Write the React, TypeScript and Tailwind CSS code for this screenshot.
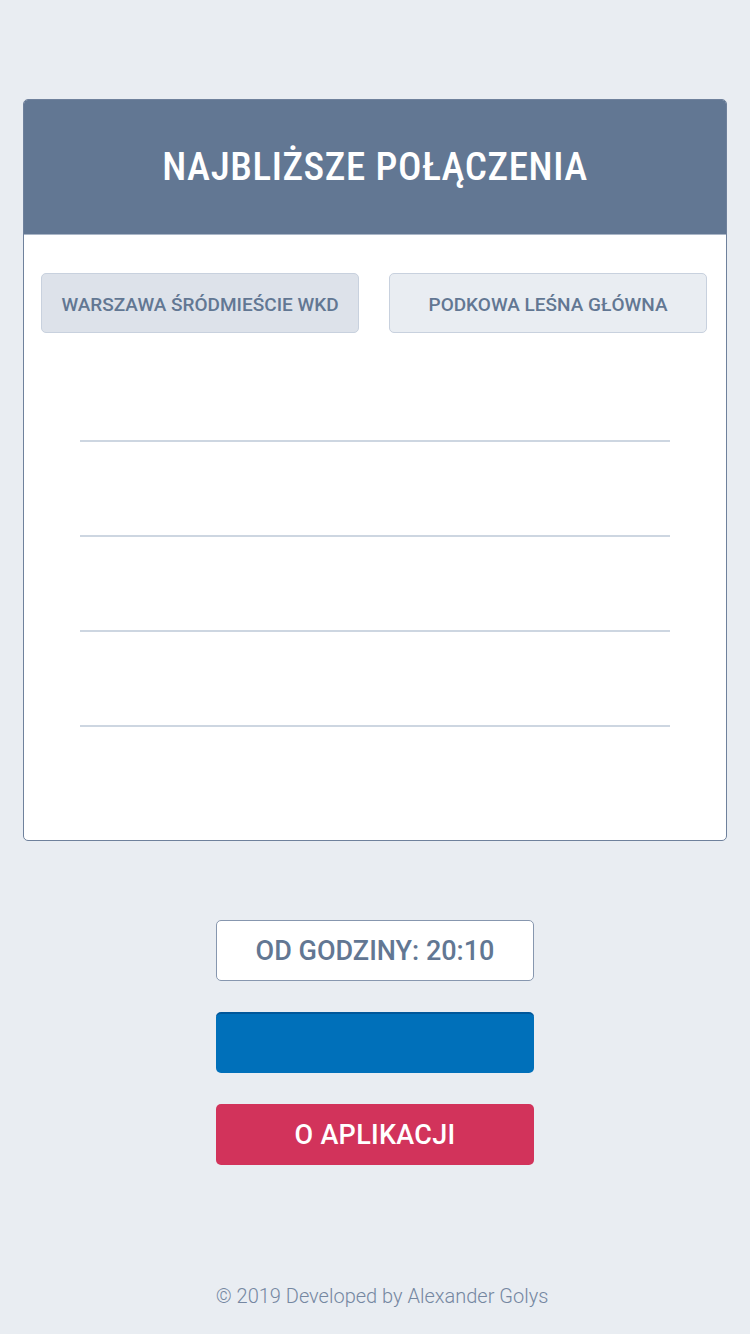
export default function App() {
  const rows = [0, 1, 2, 3];
  return (
    <div
      className="min-h-[1334px] w-[750px] bg-[#e9edf2] flex flex-col items-center"
      style={{ fontFamily: "Roboto, 'Noto Sans', sans-serif" }}
    >
      <div className="mt-[99px] w-[704px] h-[742px] bg-white border border-[#6f819c] rounded-[5px] overflow-hidden flex flex-col">
        <div className="h-[135px] bg-[#627793] border-b border-[#aab6c7] flex items-center justify-center">
          <h1 className="text-white text-[39px] font-medium tracking-[0.6px] font-stretch-condensed">
            NAJBLIŻSZE POŁĄCZENIA
          </h1>
        </div>
        <div className="flex gap-[30px] px-[17px] pt-[38px]">
          <div className="w-[318px] h-[60px] rounded-[5px] bg-[#dde2ea] border border-[#c8d1de] flex items-center justify-center text-[#627793] text-[19px] font-medium pt-[4px]">
            WARSZAWA ŚRÓDMIEŚCIE WKD
          </div>
          <div className="w-[318px] h-[60px] rounded-[5px] bg-[#e9edf2] border border-[#c8d1de] flex items-center justify-center text-[#627793] text-[19px] font-medium pt-[4px]">
            PODKOWA LEŚNA GŁÓWNA
          </div>
        </div>
        <div className="flex flex-col px-[56px] pt-[14px]">
          {rows.map((r) => (
            <div key={r} className="h-[95px] border-b-2 border-[#cdd6e1]" />
          ))}
        </div>
      </div>

      <div className="mt-[79px] w-[318px] h-[61px] bg-white border border-[#8797af] rounded-[5px] flex items-center justify-center text-[#627793] text-[27px] font-medium pt-[2px]">
        OD GODZINY: 20:10
      </div>
      <div className="mt-[31px] w-[318px] h-[61px] bg-[#0070ba] border-t-2 border-[#00579a] rounded-[5px]" />
      <div className="mt-[31px] w-[318px] h-[61px] bg-[#d2335b] rounded-[5px] flex items-center justify-center text-white text-[27px] font-medium tracking-[0.3px] pt-[2px]">
        O APLIKACJI
      </div>

      <div className="mt-[116px] ml-[14px] text-[#7587a1] text-[20px] font-light">
        © 2019 Developed by Alexander Golys
      </div>
    </div>
  );
}
